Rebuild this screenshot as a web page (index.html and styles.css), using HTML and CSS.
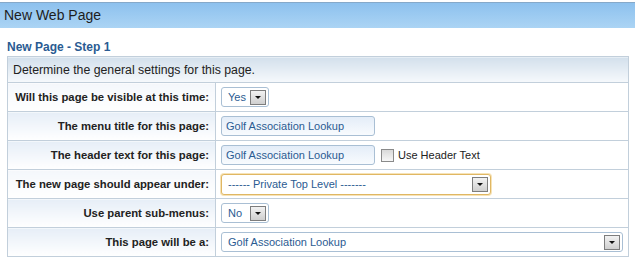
FILE: index.html
```html
<!DOCTYPE html>
<html lang="en">
<head>
    <meta charset="UTF-8">
    <title>New Web Page</title>
    <link rel="stylesheet" href="styles.css">
</head>
<body>
    <div class="titlebar">New Web Page</div>

    <h2 class="step-title">New Page - Step 1</h2>

    <table class="settings">
        <tr>
            <td colspan="2" class="intro">Determine the general settings for this page.</td>
        </tr>
        <tr>
            <th class="plain">Will this page be visible at this time:</th>
            <td>
                <div class="select select-short">
                    <span class="select-value">Yes</span>
                    <span class="arrow"></span>
                </div>
            </td>
        </tr>
        <tr>
            <th>The menu title for this page:</th>
            <td><input type="text" class="text-input" value="Golf Association Lookup"></td>
        </tr>
        <tr>
            <th>The header text for this page:</th>
            <td>
                <div class="field-row">
                    <input type="text" class="text-input" value="Golf Association Lookup">
                    <label class="check"><span class="checkbox"></span>Use Header Text</label>
                </div>
            </td>
        </tr>
        <tr>
            <th class="plain">The new page should appear under:</th>
            <td>
                <div class="select select-medium focused">
                    <span class="select-value">------ Private Top Level -------</span>
                    <span class="arrow"></span>
                </div>
            </td>
        </tr>
        <tr>
            <th>Use parent sub-menus:</th>
            <td>
                <div class="select select-short">
                    <span class="select-value">No</span>
                    <span class="arrow"></span>
                </div>
            </td>
        </tr>
        <tr>
            <th>This page will be a:</th>
            <td>
                <div class="select select-long">
                    <span class="select-value">Golf Association Lookup</span>
                    <span class="arrow"></span>
                </div>
            </td>
        </tr>
    </table>
</body>
</html>
```

FILE: styles.css
```css
body {
    font-family: 'Liberation Sans', Arial, sans-serif;
    margin: 0;
    padding: 0;
    background-color: #ffffff;
    color: #222;
}

.titlebar {
    margin-top: 2px;
    height: 25px;
    line-height: 25px;
    padding-left: 4px;
    font-size: 14px;
    color: #1d1d1d;
    border-top: 1px solid #86a9c9;
    background: linear-gradient(#8dc1ee, #abd4f4);
}

.step-title {
    margin: 12px 0 2px 7px;
    font-size: 12px;
    font-weight: bold;
    color: #2a5b92;
    line-height: 14px;
}

.settings {
    margin-left: 7px;
    width: 622px;
    border-collapse: collapse;
    border: 1px solid #c2cfdb;
}

.settings td,
.settings th {
    border-top: 1px solid #c2cfdb;
    border-bottom: 1px solid #c2cfdb;
    height: 28px;
    padding: 0;
}

.settings th {
    width: 201px;
    padding-right: 6px;
    text-align: right;
    font-size: 11.3px;
    font-weight: bold;
    color: #222;
    border-right: 1px solid #c2cfdb;
    background: linear-gradient(#e6eef7, #ffffff);
}

.settings th.plain {
    background: linear-gradient(#f4f7fb, #ffffff);
}

.settings td {
    padding-left: 5px;
}

.settings td.intro {
    height: 25px;
    padding-left: 5px;
    font-size: 12.3px;
    color: #222;
    background: linear-gradient(#d3e0ec, #f6f9fc);
}

.select {
    display: flex;
    align-items: center;
    justify-content: space-between;
    height: 18px;
    padding: 0 2px 0 6px;
    border: 1px solid #a9bfd4;
    border-radius: 3px;
    background-color: #fff;
    font-size: 11px;
    color: #2b5b92;
}

.select-short {
    width: 38px;
}

.select-medium {
    width: 260px;
    height: 19px;
}

.select-long {
    width: 392px;
}

.select.focused {
    border-color: #e0b763;
    box-shadow: 0 0 0 1px #f6e3b8;
}

.arrow {
    position: relative;
    width: 14px;
    height: 13px;
    border: 1px solid #7d7d7d;
    background: linear-gradient(#f2f2f2, #cfcfcf);
}

.arrow::after {
    content: "";
    position: absolute;
    left: 4px;
    top: 5px;
    border-left: 3px solid transparent;
    border-right: 3px solid transparent;
    border-top: 3px solid #111;
}

.text-input {
    box-sizing: border-box;
    width: 154px;
    height: 20px;
    padding: 0 4px;
    border: 1px solid #a9bfd4;
    border-radius: 3px;
    background: linear-gradient(#e4edf8, #f8fbfe);
    font-family: 'Liberation Sans', Arial, sans-serif;
    font-size: 11px;
    color: #2b5b92;
    outline: none;
}

.field-row {
    display: flex;
    align-items: center;
    gap: 6px;
}

.check {
    display: flex;
    align-items: center;
    gap: 4px;
    font-size: 11px;
    color: #222;
}

.checkbox {
    width: 11px;
    height: 11px;
    border: 1px solid #8a8a8a;
    background: linear-gradient(#d9d9d9, #f7f7f7);
}
```
